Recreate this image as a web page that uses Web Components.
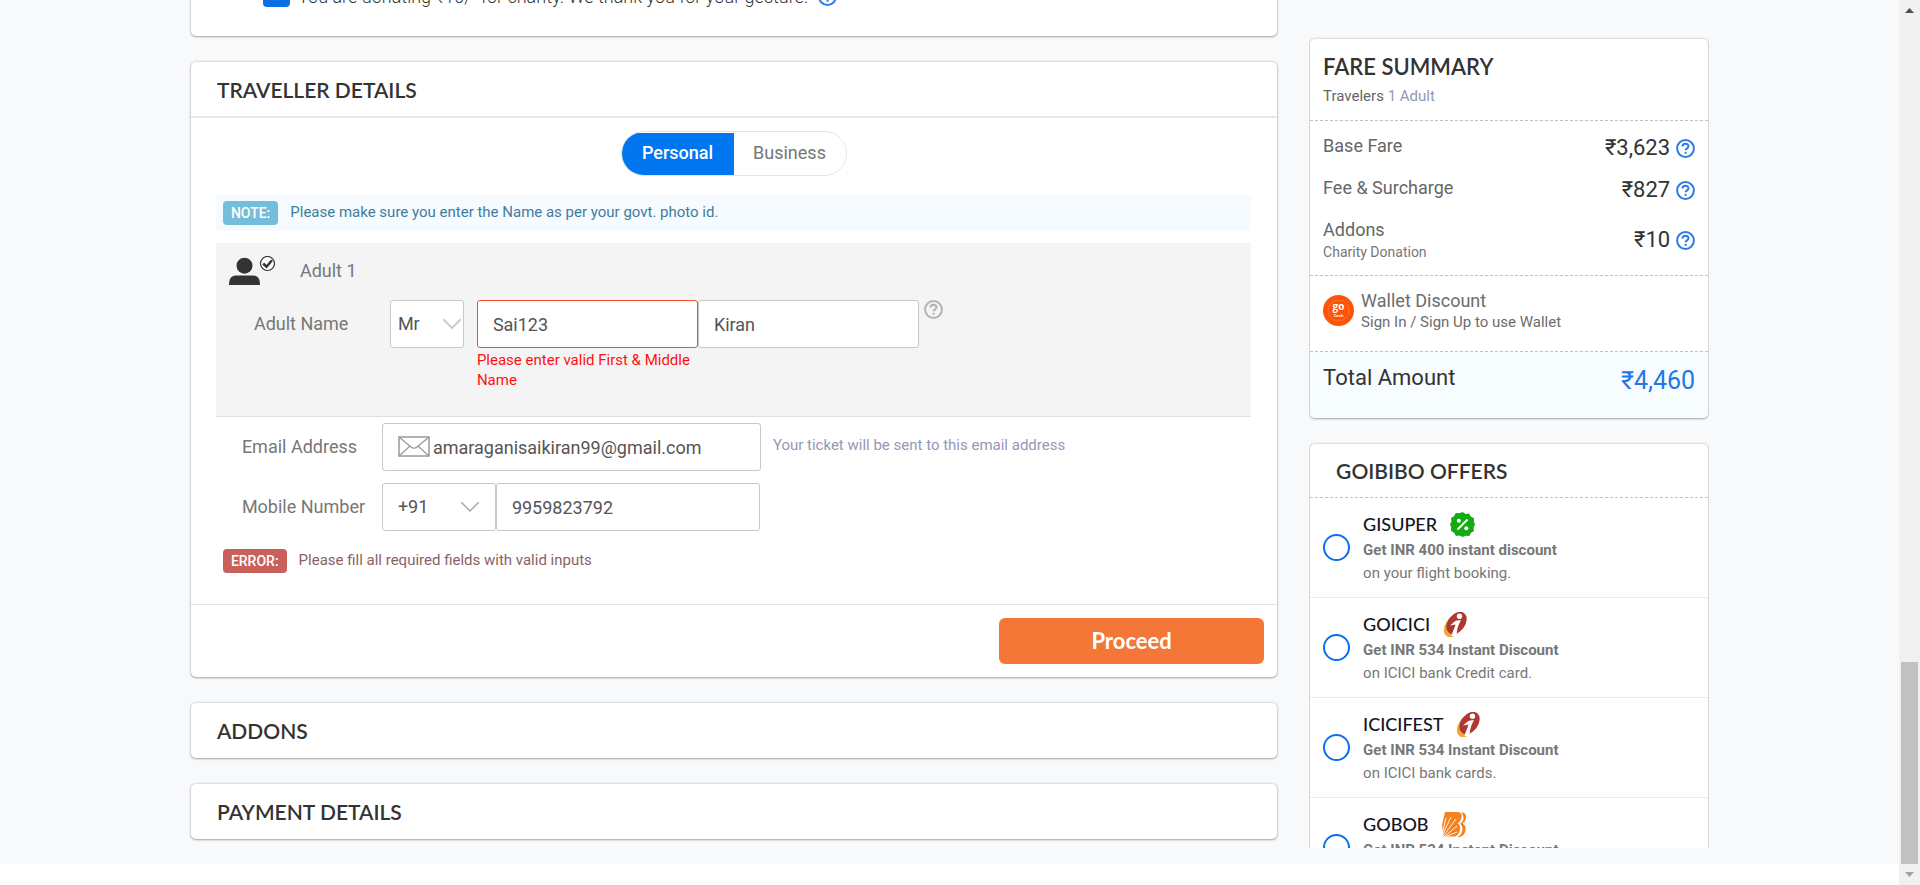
<!DOCTYPE html>
<html lang="en">
<head>
<meta charset="utf-8">
<title>Traveller details</title>
<style>
  html, body { margin: 0; }
  body {
    min-height: 100vh;
    overflow: hidden;
    font: 18px/24px Roboto, "Liberation Sans", sans-serif;
    color: #333;
    background: #fff;
    --head-font: Lato, "Open Sans", sans-serif;
  }
</style>
</head>
<body>
<booking-page>
  <charity-card slot="main"></charity-card>
  <ui-card slot="main" divided>
    <span slot="title">TRAVELLER DETAILS</span>
    <traveller-form></traveller-form>
  </ui-card>
  <ui-card slot="main"><span slot="title">ADDONS</span></ui-card>
  <ui-card slot="main"><span slot="title">PAYMENT DETAILS</span></ui-card>
  <fare-summary slot="side"></fare-summary>
  <offer-list slot="side">
    <offer-item code="GISUPER" deal="Get INR 400 instant discount" terms="on your flight booking." icon="percent"></offer-item>
    <offer-item code="GOICICI" deal="Get INR 534 Instant Discount" terms="on ICICI bank Credit card." icon="icici"></offer-item>
    <offer-item code="ICICIFEST" deal="Get INR 534 Instant Discount" terms="on ICICI bank cards." icon="icici"></offer-item>
    <offer-item code="GOBOB" deal="Get INR 534 Instant Discount" terms="on Bank of Baroda cards." icon="bob"></offer-item>
  </offer-list>
</booking-page>

<script>
const define = (name, html, setup) => {
  const template = document.createElement('template');
  template.innerHTML = '<style>*{box-sizing:border-box}h2,p{margin:0}svg{display:block}</style>' + html;
  customElements.define(name, class extends HTMLElement {
    constructor() {
      super();
      this.attachShadow({ mode: 'open' }).append(template.content.cloneNode(true));
    }
    connectedCallback() { if (setup) setup(this, this.shadowRoot); }
  });
};

/* Page frame: two columns of cards and the scroll bar */
define('booking-page', `
<style>
  :host { display: grid; grid-template-columns: minmax(0,1fr) 21px; height: 100vh; }
  .page { padding: 0 10%; background: #f8f9fb; display: grid; grid-template-columns: minmax(0,1fr) 400px; column-gap: 32px; align-self: start; padding-bottom: 25px; }
  main { display: flex; flex-direction: column; gap: 26px; padding-left: 1px; min-width: 0; margin-top: -25px; }
  aside { display: flex; flex-direction: column; gap: 26px; height: calc(100vh - 37px); margin-bottom: -12px; padding: 39px 1px 0; overflow: hidden; }
</style>
<div class="page">
  <main><slot name="main"></slot></main>
  <aside><slot name="side"></slot></aside>
</div>
<scroll-bar></scroll-bar>`);

define('scroll-bar', `
<style>
  :host { display: grid; grid-template-rows: 21px 641fr 202fr 21px; background: #f1f1f1; }
  .thumb { grid-row: 3; background: #c1c1c1; margin: 0 2px; }
  svg { justify-self: center; align-self: center; }
  .down { grid-row: 4; }
</style>
<svg width="9" height="5" viewBox="0 0 9 5"><path d="M0 5h9L4.500 0z" fill="#505050"/></svg>
<div class="thumb"></div>
<svg class="down" width="9" height="5" viewBox="0 0 9 5"><path d="M0 0h9L4.500 5z" fill="#a3a3a3"/></svg>`);

const CARD = 'background:#fff;border-radius:5px;box-shadow:0 0 2px 1px rgba(0,0,0,.12),0 1px 2px rgba(0,0,0,.25);';

define('ui-card', `
<style>
  :host { display: block; ${CARD} }
  h2 { font: 600 21px/24px var(--head-font); padding: 16px 26px 15px; }
  :host([divided]) h2 { padding-bottom: 14px; border-bottom: 2px solid #e3e8f0; }
</style>
<h2><slot name="title"></slot></h2><slot></slot>`);

define('help-icon', `
<style>:host { display: block; flex: none; color: #2d7be5; }</style>
<svg width="19" height="19" viewBox="0 0 19 19" fill="none" stroke="currentColor" stroke-width="2">
  <circle cx="9.500" cy="9.500" r="8.400"/><path d="M6.500 7.600c0-3.800 6-3.800 6-.300 0 2-2.900 2.100-2.900 4"/><path d="M8.600 13.800h2" stroke-width="2"/>
</svg>`);

define('charity-card', `
<style>
  :host { display: block; ${CARD} }
  .row { display: flex; align-items: center; padding: 8px 72px 26px; height: 61px; }
  input { appearance: none; width: 27px; height: 27px; margin: 0; border-radius: 4px; background: #0b6fe8; }
  label { padding: 0 10px 0 8px; line-height: 20px; font-weight: 300; }
  .tick { position: relative; }
  .tick svg { position: absolute; left: 7px; top: 9px; }
</style>
<div class="row"><span class="tick"><input type="checkbox" id="give" checked><svg width="14" height="12" fill="none" stroke="#fff" stroke-width="2"><path d="M1 5l4 5 8-9"/></svg></span>
<label for="give">You are donating ₹10/- for charity. We thank you for your gesture.</label><help-icon></help-icon></div>`);

/* Label and message strip, for a hint or an error */
define('status-note', `
<style>
  :host { display: flex; align-items: flex-start; gap: 12px; padding: 6px 7px; font-size: 15px; color: #427ba0; background: #f5fbff; }
  b { font: 500 14px/24px Roboto, sans-serif; color: #fff; background: #74bedb; border-radius: 4px; padding: 0 8px; }
  span { line-height: 22px; }
  :host([error]) { background: none; color: #8a6265; }
  :host([error]) b { background: #c9605b; }
</style>
<b><slot name="tag"></slot></b><span><slot></slot></span>`);

define('person-icon', `
<style>:host { display: block; }</style>
<svg width="46" height="30" viewBox="0 0 46 30"><circle cx="15.500" cy="9.700" r="8" fill="#333"/><path d="M0 29c0-6 2-9.500 7-9.500h17c5 0 7 3.500 7 9.500z" fill="#333"/><circle cx="38.500" cy="7.500" r="7" fill="#fff" stroke="#333" stroke-width="1.200"/><path d="M34.200 7.500l3.300 3.200 5.500-6.500" fill="none" stroke="#333" stroke-width="2.500"/></svg>`);

define('traveller-form', `
<style>
  :host { display: block; color: #777; }
  .body { padding: 13px 26px 31px 25px; }
  .tabs { display: flex; width: 226px; margin: 0 auto 19px; border: 1px solid #e4e4e4; border-radius: 23px; overflow: hidden; height: 45px; padding-top: 1px; }
  .tabs button { flex: 1; border: 0; background: #fff; font: inherit; color: #777; padding: 0 0 2px; }
  .tabs .on { background: #0077f0; color: #fff; font-weight: 500; }
  .adult { background: #f4f4f4; border-bottom: 1px solid #e0e0e0; margin-top: 12px; padding: 13px 13px 26px; }
  .head { display: flex; align-items: center; gap: 25px; }
  .row { display: flex; align-items: center; }
  .row label { flex: none; width: 140px; }
  .name { padding-left: 25px; margin-top: 14px; align-items: flex-start; }
  .name label { width: 136px; line-height: 48px; }
  .contact { padding-left: 26px; margin-top: 6px; }
  .phone { margin-top: 12px; }
  input, select { appearance: none; display: block; height: 48px; margin: 0; border: 1px solid #c8c8c8; border-radius: 3px; background: #fff; font: inherit; color: #555; padding: 0 15px; outline: 0; }
  .pick { position: relative; }
  .pick svg { position: absolute; top: 19px; right: 17px; pointer-events: none; color: #aaa; }
  #title { width: 74px; padding: 0 7px; }
  .name .pick { margin-right: 13px; }
  .name .pick svg { right: 3px; color: #ccc; }
  .field { width: 221px; }
  .field input { width: 100%; }
  #first { border-color: #f0502f; }
  .field p { color: #f11; font-size: 15px; line-height: 20px; margin-top: 2px; }
  help-icon { color: #b3b3b3; margin-left: 5px; }
  .mail { position: relative; }
  .mail svg { position: absolute; left: 16px; top: 13px; }
  #email { width: 379px; padding-left: 50px; }
  .hint { font-size: 15px; line-height: 20px; color: #9498b5; margin: 0 0 5px 12px; }
  #code { width: 114px; }
  #phone { width: 264px; }
  status-note[error] { margin-top: 12px; padding-bottom: 0; }
  footer { border-top: 1px solid #e4e4e4; padding: 13px; display: flex; justify-content: flex-end; }
  footer button { width: 265px; height: 46px; border: 0; border-radius: 6px; background: #f57738; color: #fff; font: 700 22px/24px var(--head-font); padding: 0; }
</style>
<div class="body">
  <div class="tabs"><button class="on" type="button">Personal</button><button type="button">Business</button></div>
  <status-note><span slot="tag">NOTE:</span>Please make sure you enter the Name as per your govt. photo id.</status-note>
  <div class="adult">
    <div class="head"><person-icon></person-icon><span>Adult 1</span></div>
    <div class="row name">
      <label for="first">Adult Name</label>
      <div class="pick"><select id="title" aria-label="Title"><option>Mr</option></select><svg width="18" height="10" fill="none" stroke="currentColor" stroke-width="2"><path d="M0 0l9 9 9-9"/></svg></div>
      <div class="field"><input id="first" value="Sai123"><p>Please enter valid First &amp; Middle Name</p></div>
      <div class="field"><input aria-label="Last name" value="Kiran"></div>
      <help-icon></help-icon>
    </div>
  </div>
  <div class="row contact"><label for="email">Email Address</label>
    <div class="mail"><input id="email" type="email" value="amaraganisaikiran99@gmail.com"><svg width="32" height="21" viewBox="0 0 32 21" fill="none" stroke="#999"><path d="M1 1h30v19H1z" stroke-width="1.500"/><path d="M1 1l12 10q3 2.500 6 0L31 1M1 20l11-10M31 20L20 10" stroke-width="1.200"/></svg></div>
    <span class="hint">Your ticket will be sent to this email address</span>
  </div>
  <div class="row contact phone"><label for="phone">Mobile Number</label>
    <div class="pick"><select id="code" aria-label="Country code"><option>+91</option></select><svg width="18" height="10" fill="none" stroke="currentColor" stroke-width="1.500"><path d="M0 0l9 9 9-9"/></svg></div>
    <input id="phone" type="tel" value="9959823792">
  </div>
  <status-note error><span slot="tag">ERROR:</span>Please fill all required fields with valid inputs</status-note>
</div>
<footer><button type="button">Proceed</button></footer>`);

define('fare-row', `
<style>
  :host { display: flex; justify-content: space-between; align-items: flex-start; }
  :host([centred]) { align-items: center; }
  .label { color: #666; }
  .price { display: flex; align-items: center; gap: 6px; font-size: 22px; line-height: 28px; }
</style>
<div class="label"><slot></slot></div><div class="price"><slot name="price"></slot><help-icon></help-icon></div>`);

define('fare-summary', `
<style>
  :host { display: block; flex: none; ${CARD} }
  section { padding: 13px; border-bottom: 1px dashed #c2c2c2; }
  .top { padding: 14px 13px; }
  h2 { font: 600 22px/28px var(--head-font); }
  .who { font-size: 15px; line-height: 20px; color: #666; margin-top: 5px; }
  .who span { color: #9498b5; }
  .rows { display: grid; gap: 14px; }
  small { display: block; font-size: 14px; line-height: 20px; color: #777; }
  .wallet { display: flex; align-items: center; gap: 7px; color: #6c6c6c; padding-bottom: 19px; line-height: 23px; }
  .wallet p:last-child { font-size: 15px; line-height: 20px; }
  .total { display: flex; justify-content: space-between; padding: 12px 13px 26px; font-size: 22px; line-height: 28px; background: #f7fcff; border-radius: 0 0 5px 5px; }
  .total b { font-size: 25px; font-weight: 400; color: #2277e8; line-height: 34px; margin-bottom: -6px; }
</style>
<section class="top"><h2>FARE SUMMARY</h2><p class="who">Travelers <span>1 Adult</span></p></section>
<section class="rows">
  <fare-row>Base Fare<span slot="price">₹3,623</span></fare-row>
  <fare-row>Fee &amp; Surcharge<span slot="price">₹827</span></fare-row>
  <fare-row centred>Addons<small>Charity Donation</small><span slot="price">₹10</span></fare-row>
</section>
<section class="wallet">
  <svg width="31" height="31" viewBox="0 0 31 31"><circle cx="15.500" cy="15.500" r="15.500" fill="#ff5306"/><circle cx="15.500" cy="15.500" r="10.500" fill="none" stroke="#ff8148" stroke-width=".600"/><text x="15.500" y="15" text-anchor="middle" font-family="Open Sans" font-weight="700" font-size="10" fill="#fff">go</text><text x="15.500" y="22" text-anchor="middle" font-family="Open Sans" font-weight="700" font-size="4" fill="#fff">Cash</text></svg>
  <div><p>Wallet Discount</p><p>Sign In / Sign Up to use Wallet</p></div>
</section>
<div class="total"><span>Total Amount</span><b>₹4,460</b></div>`);

define('offer-list', `
<style>
  :host { display: block; ${CARD} flex: 1; min-height: 0; border-radius: 5px 5px 0 0; }
  h2 { font: 600 21px/24px var(--head-font); padding: 15px 26px 14px; border-bottom: 1px dashed #c2c2c2; }
</style>
<h2>GOIBIBO OFFERS</h2><slot></slot>`);

const OFFER_ICONS = {
  percent: '<path d="M12.500 0l3 2 3.500-.500 1.700 3 3.300 1.700-.200 3.500 1.200 2.800-1.500 3 .500 3.500-3 1.700-1.700 3.300-3.500-.200-3.300 1.200-3-1.500-3.500.500-1.700-3L1 18.800l.200-3.500L0 12.500l1.500-3L1 6l3-1.700L5.700 1l3.500.200z" fill="#12ab12"/><path d="M17.500 7.500l-10 10" stroke="#fff" stroke-width="2"/><circle cx="8.800" cy="8.800" r="2" fill="#fff"/><circle cx="16.300" cy="16.300" r="2" fill="#fff"/>',
  icici: '<ellipse cx="10" cy="14.500" rx="8" ry="11.500" transform="rotate(33 10 14.500)" fill="#f3a73b"/><ellipse cx="13.500" cy="11" rx="8.500" ry="12.500" transform="rotate(38 13.500 11)" fill="#ae3831"/><circle cx="16.500" cy="4.200" r="2.700" fill="#fff"/><path d="M10 11c3-3 5-2.500 8-3-2 4-4 8-4 12l-1 4H8.500c1-5 3-7 4-11.500L7 13.500z" fill="#fff"/>',
  bob: '<path d="M3 0h13q5 1 3.500 6-.800 4-4 5.500 3.500 1.500 2.500 6-1 5.500-5 7H1.500L0 13z" fill="#f58220"/><path d="M19 0q6 1 5 6-.500 4-3.500 5.500 4 2 3 7-1 5-5.500 6.500h-2.500q5-3 5-8 0-3-2.500-5.500 3.500-2 3.500-6 0-3.500-2.500-5.500z" fill="#f58220"/><path d="M0 23L4 6M0 24L9 5M1 24.500L14 7M2 25l13-11M3 25l12-5" stroke="#fff" stroke-width=".900"/>'
};
define('offer-item', `
<style>
  :host { display: block; }
  label { display: grid; grid-template-columns: 27px 1fr; column-gap: 13px; align-items: center; padding: 11px 13px 12px; border-bottom: 1px solid #ececec; }
  input { appearance: none; width: 27px; height: 27px; margin: 0; border: 2px solid #0a6ff0; border-radius: 50%; background: #fff; }
  .code { display: flex; align-items: center; gap: 13px; font: 500 18px/30px var(--head-font); color: #141424; }
  .text { display: block; font-size: 15px; line-height: 23px; color: #777; }
  b { display: block; }
</style>
<label><input type="radio" name="offer"><span><span class="code"><span class="c"></span><svg width="25" height="25" viewBox="0 0 25 25"></svg></span><span class="text"><b></b><span class="t"></span></span></span></label>`,
(host, root) => {
  root.querySelector('.c').textContent = host.getAttribute('code');
  root.querySelector('b').textContent = host.getAttribute('deal');
  root.querySelector('.t').textContent = host.getAttribute('terms');
  root.querySelector('svg').innerHTML = OFFER_ICONS[host.getAttribute('icon')];
});
</script>
</body>
</html>
